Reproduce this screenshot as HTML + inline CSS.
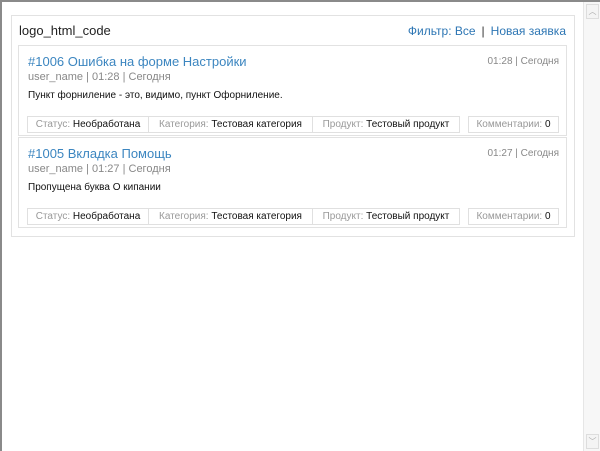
<!DOCTYPE html>
<html><head><meta charset="utf-8"><style>
*{margin:0;padding:0;box-sizing:border-box}
body{width:600px;height:451px;overflow:hidden;background:#fff;font-family:"Liberation Sans",Arial,sans-serif;position:relative}
.frame{position:absolute;left:0;top:0;width:600px;height:451px;border-left:2px solid #8a8a8a;border-top:2px solid #8a8a8a}
.sb{position:absolute;right:0;top:2px;width:17px;height:449px;background:#f7f7f7;border-left:1px solid #e6e6e6}
.sb .a{position:absolute;left:2px;width:13px;height:15px;border:1px solid #ddd;background:#f4f4f4;color:#aaa;font-size:8px;text-align:center;line-height:13px}
.wrap{position:absolute;left:11px;top:15px;width:564px;height:222px;border:1px solid #e2e2e2}
.hdr{position:absolute;left:7px;top:7px;font-size:13px;color:#222}
.links{position:absolute;right:8px;top:8px;font-size:12px;color:#2d76b4}
.links span{color:#333;margin:0 6px}
.card{position:absolute;left:6px;width:549px;height:91px;border:1px solid #e2e2e2;white-space:nowrap}
.t{position:absolute;left:9px;top:8px;font-size:13px;color:#3c86c0}
.m{position:absolute;left:9px;top:25px;font-size:11px;color:#888}
.d{position:absolute;right:7px;top:10px;font-size:10px;color:#888}
.x{position:absolute;left:9px;top:44px;font-size:10px;color:#111}
.tags{position:absolute;top:70px;height:17px;font-size:10px;color:#999}
.tag{position:absolute;top:0;height:17px;border:1px solid #e0e0e0;line-height:15px;text-align:center;white-space:nowrap}
.tag b{font-weight:normal;color:#111}
</style></head><body>
<div class="frame"></div>
<div class="sb"><div class="a" style="top:2px">︿</div><div class="a" style="bottom:2px">﹀</div></div>
<div class="wrap">
<div class="hdr">logo_html_code</div>
<div class="links">Фильтр: Все<span>|</span>Новая заявка</div>
<div class="card" style="top:29px">
<div class="t">#1006 Ошибка на форме Настройки</div>
<div class="m">user_name | 01:28 | Сегодня</div>
<div class="d">01:28 | Сегодня</div>
<div class="x">Пункт форниление - это, видимо, пункт Офорниление.</div>
<div class="tags">
<div class="tag" style="left:8px;width:122px">Статус: <b>Необработана</b></div>
<div class="tag" style="left:129px;width:165px">Категория: <b>Тестовая категория</b></div>
<div class="tag" style="left:293px;width:148px">Продукт: <b>Тестовый продукт</b></div>
<div class="tag" style="left:449px;width:91px">Комментарии: <b>0</b></div>
</div></div>
<div class="card" style="top:121px">
<div class="t">#1005 Вкладка Помощь</div>
<div class="m">user_name | 01:27 | Сегодня</div>
<div class="d">01:27 | Сегодня</div>
<div class="x">Пропущена буква О кипании</div>
<div class="tags">
<div class="tag" style="left:8px;width:122px">Статус: <b>Необработана</b></div>
<div class="tag" style="left:129px;width:165px">Категория: <b>Тестовая категория</b></div>
<div class="tag" style="left:293px;width:148px">Продукт: <b>Тестовый продукт</b></div>
<div class="tag" style="left:449px;width:91px">Комментарии: <b>0</b></div>
</div></div>
</div>
</body></html>
